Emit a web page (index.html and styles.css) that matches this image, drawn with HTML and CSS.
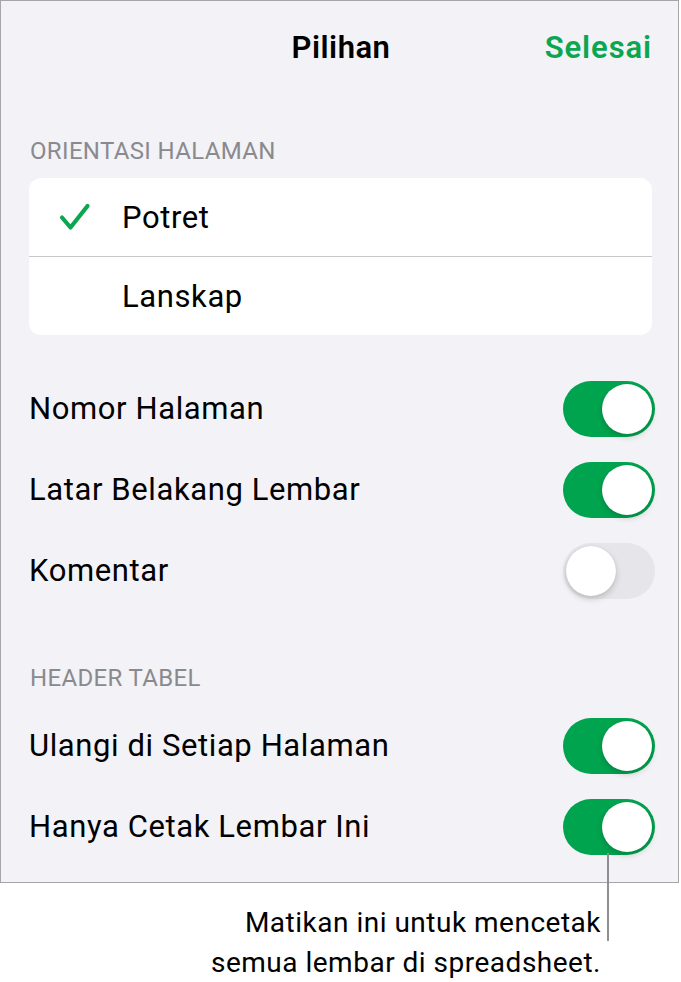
FILE: index.html
```html
<!DOCTYPE html>
<html lang="id">
<head>
  <meta charset="UTF-8" />
  <title>Pilihan</title>
  <link rel="stylesheet" href="styles.css">
</head>
<body>

  <div class="sheet">
    <!-- Panel pilihan cetak -->
    <div class="panel">
      <header class="nav">
        <span></span>
        <h1>Pilihan</h1>
        <a class="done">Selesai</a>
      </header>

      <p class="section-title">Orientasi Halaman</p>
      <ul class="choice-card">
        <li class="choice">
          <svg class="check" viewBox="0 0 32 28" width="32" height="28">
            <path d="M3 14.5 L11.5 24.5 L28.5 3" fill="none" stroke="#0aa650" stroke-width="4.2" stroke-linecap="round" stroke-linejoin="round"/>
          </svg>
          <span>Potret</span>
        </li>
        <li class="choice"><span>Lanskap</span></li>
      </ul>

      <ul class="switch-list first">
        <li class="switch-row"><span>Nomor Halaman</span><span class="toggle on"></span></li>
        <li class="switch-row"><span>Latar Belakang Lembar</span><span class="toggle on"></span></li>
        <li class="switch-row"><span>Komentar</span><span class="toggle"></span></li>
      </ul>

      <p class="section-title second">Header Tabel</p>
      <ul class="switch-list">
        <li class="switch-row"><span>Ulangi di Setiap Halaman</span><span class="toggle on"></span></li>
        <li class="switch-row"><span>Hanya Cetak Lembar Ini</span><span class="toggle on"></span></li>
      </ul>
    </div>

    <!-- Keterangan untuk sakelar terakhir -->
    <p class="callout">Matikan ini untuk mencetak<br>semua lembar di spreadsheet.</p>
    <span class="leader"></span>
  </div>

</body>
</html>
```

FILE: styles.css
```css
/* ---------- Dasar ---------- */
body{
  margin:0;
  background:#fff;
  font-family:Roboto,"Liberation Sans",sans-serif;
  color:#000;
}
ul{list-style:none;margin:0;padding:0}

.sheet{position:relative;width:681px}

/* ---------- Panel ---------- */
.panel{
  width:679px;
  box-sizing:border-box;
  background:#f2f2f7;
  border:1px solid #a6a6aa;
  padding-bottom:15px;
}

.nav{
  height:92px;
  display:grid;
  grid-template-columns:1fr auto 1fr;
  align-items:center;
  padding:0 26px 0 29px;
}
.nav h1{margin:0;font-size:31px;font-weight:600;letter-spacing:.5px}
.done{justify-self:end;color:#0aa650;font-size:31px;font-weight:600;letter-spacing:.9px}

.section-title{
  margin:44px 0 13px 29px;
  font-size:24px;
  line-height:28px;
  color:#8a8a8e;
  text-transform:uppercase;
  letter-spacing:.35px;
}
.section-title.second{margin-top:53px}

/* ---------- Kartu orientasi ---------- */
.choice-card{
  margin:0 26px 0 28px;
  background:#fff;
  border-radius:12px;
}
.choice{
  height:78px;
  display:flex;
  align-items:center;
  padding-left:93px;
  position:relative;
  font-size:31px;
  letter-spacing:.6px;
}
.choice + .choice{border-top:1px solid #c8c7cc}
.check{position:absolute;left:30px;top:25px}

/* ---------- Baris sakelar ---------- */
.switch-list.first{margin-top:33px}
.switch-row{
  height:81px;
  display:flex;
  align-items:center;
  justify-content:space-between;
  padding:0 23px 0 28px;
  font-size:31px;
  letter-spacing:.6px;
}

.toggle{
  position:relative;
  width:92px;
  height:56px;
  border-radius:28px;
  background:#e5e5ea;
}
.toggle::after{
  content:"";
  position:absolute;
  top:3px;
  left:3px;
  width:50px;
  height:50px;
  border-radius:50%;
  background:#fff;
  box-shadow:0 3px 6px rgba(0,0,0,.18),0 0 1px rgba(0,0,0,.15);
}
.toggle.on{background:#00a44f}
.toggle.on::after{left:39px}

/* ---------- Keterangan ---------- */
.callout{
  margin:20px 80px 0 0;
  text-align:right;
  font-size:28px;
  line-height:40px;
  letter-spacing:.5px;
}
.leader{
  position:absolute;
  left:607px;
  top:853px;
  width:2px;
  height:88px;
  background:#8e8e93;
}
```
